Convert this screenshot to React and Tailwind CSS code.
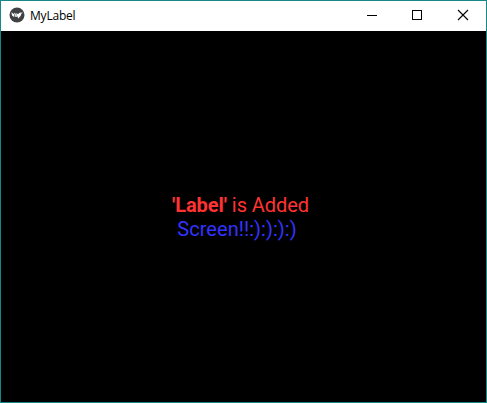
function WindowControls() {
  return (
    <svg width="137" height="30" viewBox="0 0 137 30" fill="none" stroke="#000" shapeRendering="crispEdges" className="shrink-0">
      <path d="M18 14.5h10" />
      <rect x="63.5" y="9.5" width="9" height="9" />
      <path d="M109 9l10 10M119 9l-10 10" shapeRendering="auto" strokeWidth="1.1" />
    </svg>
  );
}

function AppIcon() {
  return (
    <svg width="16" height="16" viewBox="0 0 16 16" className="mb-[2px] shrink-0">
      <circle cx="8" cy="8" r="7.5" fill="#3f4144" />
      <path d="M2.3 5.3l2.8 2 .2 2.9-2.1-1.6z" fill="#fff" />
      <path d="M4.9 5.6l2.3 1.5 1.2 2.9-2.4-.2z" fill="#ddd" />
      <path d="M7 6.3l2.2.8 1.4-1.4 3.4-.2-1.7 1.2-.6 2.1-2.4 2.6-.9-2z" fill="#fff" />
    </svg>
  );
}

export default function App() {
  return (
    <div className="flex h-[403px] w-[487px] flex-col overflow-hidden border border-[#16888a] bg-black">
      <header className="flex h-[30px] shrink-0 items-center justify-between bg-white pl-2">
        <div className="flex items-center gap-[5px]">
          <AppIcon />
          <span className="font-['Open_Sans','Noto_Sans',sans-serif] text-[12px] leading-4 tracking-[-0.2px] text-black">MyLabel</span>
        </div>
        <WindowControls />
      </header>
      <main className="flex flex-1 flex-col items-center pt-[162px] pr-[6px] font-[Roboto,sans-serif] text-[20px] leading-6 whitespace-pre">
        <p className="tracking-[-0.06px] text-[#ff3333]"><b className="font-bold">'Label'</b> is Added</p>
        <p className="pr-[7px] tracking-[0.04px] text-[#3333ff]">Screen!!:):):):)</p>
      </main>
    </div>
  );
}
